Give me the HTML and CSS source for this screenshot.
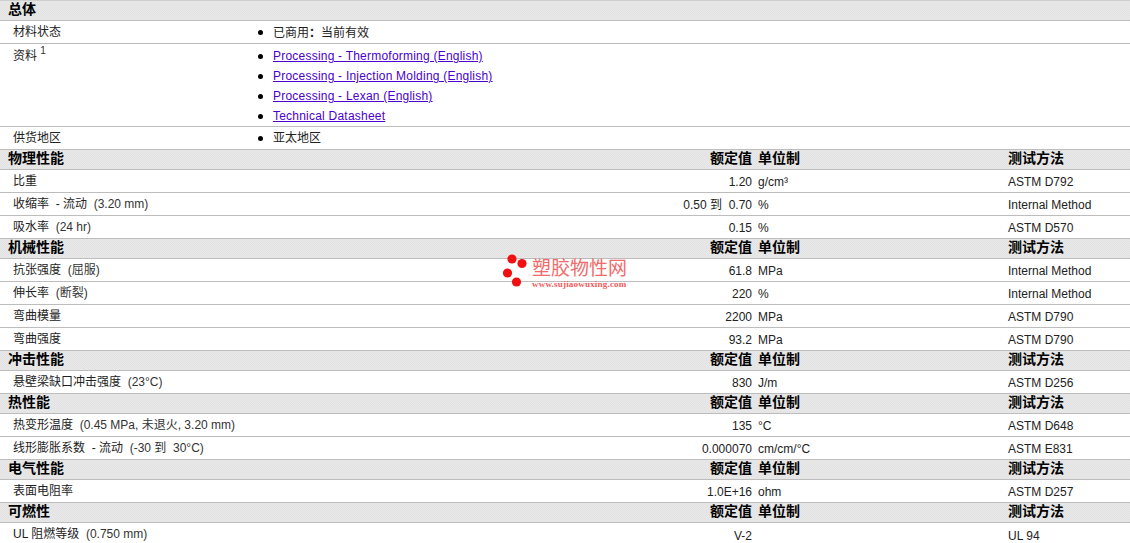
FILE: index.html
```html
<!DOCTYPE html>
<html lang="zh">
<head>
<meta charset="utf-8">
<title>塑胶物性</title>
<link rel="stylesheet" href="styles.css">
</head>
<body>
<main class="sheet">
<table class="props">
<colgroup><col class="c-label"><col class="c-value"><col class="c-unit"><col class="c-test"></colgroup>
<tbody>
<tr class="head first"><th colspan="4">总体</th></tr>
<tr><td>材料状态</td><td colspan="3" class="list-cell"><ul><li>已商用<span class="colon">：</span>当前有效</li></ul></td></tr>
<tr class="docs"><td class="top">资料 <sup>1</sup></td><td colspan="3" class="list-cell"><ul>
<li><a href="#">Processing - Thermoforming (English)</a></li>
<li><a href="#">Processing - Injection Molding (English)</a></li>
<li><a href="#">Processing - Lexan (English)</a></li>
<li><a href="#">Technical Datasheet</a></li>
</ul></td></tr>
<tr><td>供货地区</td><td colspan="3" class="list-cell"><ul><li>亚太地区</li></ul></td></tr>

<tr class="head"><th class="name">物理性能</th><th class="val">额定值</th><th>单位制</th><th>测试方法</th></tr>
<tr><td>比重</td><td class="val">1.20</td><td class="unit">g/cm³</td><td class="test">ASTM D792</td></tr>
<tr><td>收缩率 &nbsp;- 流动 &nbsp;<span class="note">(3.20 mm)</span></td><td class="val">0.50 到 &nbsp;0.70</td><td class="unit">%</td><td class="test">Internal Method</td></tr>
<tr><td>吸水率 &nbsp;<span class="note">(24 hr)</span></td><td class="val">0.15</td><td class="unit">%</td><td class="test">ASTM D570</td></tr>

<tr class="head"><th class="name">机械性能</th><th class="val">额定值</th><th>单位制</th><th>测试方法</th></tr>
<tr><td>抗张强度 &nbsp;<span class="note">(屈服)</span></td><td class="val">61.8</td><td class="unit">MPa</td><td class="test">Internal Method</td></tr>
<tr><td>伸长率 &nbsp;<span class="note">(断裂)</span></td><td class="val">220</td><td class="unit">%</td><td class="test">Internal Method</td></tr>
<tr><td>弯曲模量</td><td class="val">2200</td><td class="unit">MPa</td><td class="test">ASTM D790</td></tr>
<tr><td>弯曲强度</td><td class="val">93.2</td><td class="unit">MPa</td><td class="test">ASTM D790</td></tr>

<tr class="head"><th class="name">冲击性能</th><th class="val">额定值</th><th>单位制</th><th>测试方法</th></tr>
<tr><td>悬壁梁缺口冲击强度 &nbsp;<span class="note">(23°C)</span></td><td class="val">830</td><td class="unit">J/m</td><td class="test">ASTM D256</td></tr>

<tr class="head"><th class="name">热性能</th><th class="val">额定值</th><th>单位制</th><th>测试方法</th></tr>
<tr><td>热变形温度 &nbsp;<span class="note">(0.45 MPa, 未退火, 3.20 mm)</span></td><td class="val">135</td><td class="unit">°C</td><td class="test">ASTM D648</td></tr>
<tr><td>线形膨胀系数 &nbsp;- 流动 &nbsp;<span class="note">(-30 到 &nbsp;30°C)</span></td><td class="val">0.000070</td><td class="unit">cm/cm/°C</td><td class="test">ASTM E831</td></tr>

<tr class="head"><th class="name">电气性能</th><th class="val">额定值</th><th>单位制</th><th>测试方法</th></tr>
<tr><td>表面电阻率</td><td class="val">1.0E+16</td><td class="unit">ohm</td><td class="test">ASTM D257</td></tr>

<tr class="head"><th class="name">可燃性</th><th class="val">额定值</th><th>单位制</th><th>测试方法</th></tr>
<tr class="last"><td>UL 阻燃等级 &nbsp;<span class="note">(0.750 mm)</span></td><td class="val">V-2</td><td class="unit"></td><td class="test">UL 94</td></tr>
</tbody>
</table>

<div class="mark" aria-label="塑胶物性网水印">
<svg class="mark-dots" width="30" height="36" viewBox="0 0 30 36" aria-hidden="true">
<circle cx="10" cy="6" r="4.6"/><circle cx="20" cy="10.500" r="4.6"/><circle cx="5.500" cy="20" r="4.6"/><circle cx="14.500" cy="29" r="4.600"/>
</svg>
<div class="mark-text"><span class="mark-name">塑胶物性网</span><span class="mark-url">www.sujiaowuxing.com</span></div>
</div>
</main>
</body>
</html>
```
FILE: styles.css
```css
html, body { margin: 0; padding: 0; background: #fff; }
body { font-family: "Liberation Sans", "Noto Sans CJK SC", sans-serif; font-size: 12px; color: #222; overflow: hidden; }
.sheet { position: relative; width: 1130px; height: 543px; overflow: hidden; }
.props { width: 1130px; table-layout: fixed; border-collapse: separate; border-spacing: 0; }
.c-label { width: 254px; }
.c-value { width: 498px; }
.c-unit { width: 256px; }
.c-test { width: 122px; }

td, th { padding: 0; box-sizing: border-box; white-space: nowrap; border-bottom: 1px solid #bdbdbd; vertical-align: middle; line-height: 16px; }
tr { height: 23px; }
td:first-child { padding-left: 13px; padding-bottom: 1px; }
td.val, td.unit, td.test { padding-top: 2px; }
td.val { text-align: right; }
td.unit { padding-left: 6px; }
.note { color: #333; }

.head { height: 20px; }
.head th { background: repeating-conic-gradient(#e3e3e3 0 25%, #e8e8e8 0 50%) 0 0 / 2px 2px; font-size: 14px; font-weight: 700; text-align: left; color: #000; padding-bottom: 3px; }
.head th:first-child { padding-left: 8px; }
.head th:nth-child(3) { padding-left: 6px; }
.head th.val { text-align: right; }
.head.first { height: 21px; }
.head.first th { border-top: 1px solid #cfcfcf; }
.last td { border-bottom: 0; height: 21px; }

.docs td { height: 83px; }
td.top { vertical-align: top; padding-top: 4px; }
sup { font-size: 10px; line-height: 0; color: #333; vertical-align: 6px; }
.list-cell { padding-left: 4px; }
ul { margin: 0; padding: 0; list-style: none; }
li { position: relative; height: 20px; line-height: 20px; padding-left: 15px; }
li::before { content: ""; position: absolute; left: 0; top: 8px; width: 5px; height: 5px; border-radius: 50%; background: #000; }
.colon { font-family: "Noto Sans CJK TC", sans-serif; font-weight: 700; }
.docs ul { padding-top: 2px; }
a { color: #4a00d0; letter-spacing: 0.22px; }

.mark { position: absolute; left: 502px; top: 253px; display: flex; align-items: flex-start; pointer-events: none; }
.mark-dots { fill: #f01010; display: block; }
.mark-text { display: flex; flex-direction: column; }
.mark-name { font-size: 19px; line-height: 22px; margin-top: 5px; color: #f26a6a; }
.mark-url { font-family: "Liberation Serif", serif; font-size: 9px; font-weight: 700; line-height: 11px; color: #f25a5a; letter-spacing: 0.2px; margin-top: -1px; }
```
